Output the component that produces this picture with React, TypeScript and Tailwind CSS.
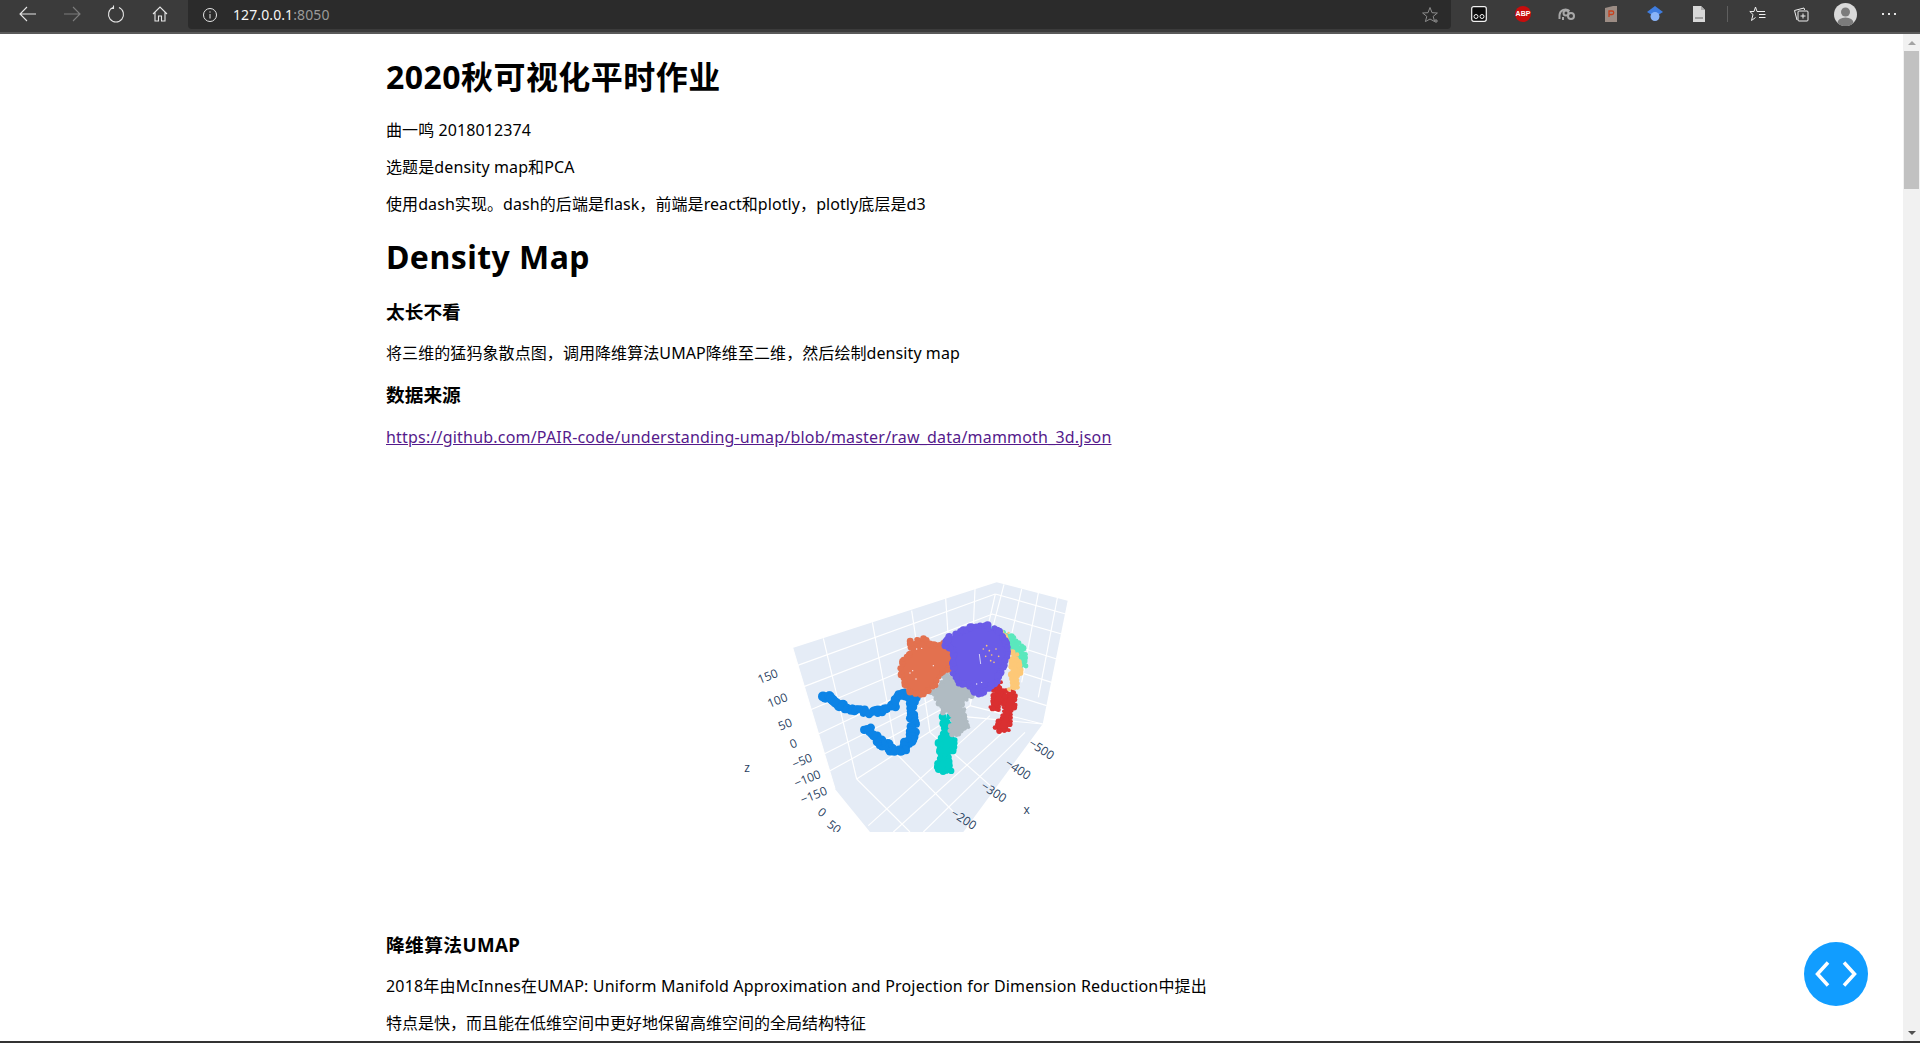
import React from "react";

type Pt = [number, number];

const FONT = "font-['Noto_Sans','Noto_Sans_CJK_SC',sans-serif]";

// repeatable noise, so the scatter looks the same on every load
function noise(i: number) {
  const v = Math.sin(i * 12.9898) * 43758.5453;
  return v - Math.floor(v);
}

// points along a polyline, used to give the scatter blobs their bumpy edges
function sample(points: Pt[], step: number, closed = false): Pt[] {
  const out: Pt[] = [];
  const list = closed ? [...points, points[0]] : points;
  for (let i = 0; i < list.length - 1; i++) {
    const [x1, y1] = list[i];
    const [x2, y2] = list[i + 1];
    const n = Math.max(1, Math.round(Math.hypot(x2 - x1, y2 - y1) / step));
    for (let j = 0; j < n; j++) {
      out.push([x1 + ((x2 - x1) * j) / n, y1 + ((y2 - y1) * j) / n]);
    }
  }
  return out;
}

function Blob({ points, color, r = 9 }: { points: Pt[]; color: string; r?: number }) {
  return (
    <g fill={color}>
      <polygon points={points.map((p) => p.join(",")).join(" ")} />
      {sample(points, 11, true).map(([x, y], i) => (
        <circle key={i} cx={x + (noise(i) - 0.5) * 9} cy={y + (noise(i + 50) - 0.5) * 9} r={r + noise(i + 90) * 4} />
      ))}
    </g>
  );
}

const trunk: Pt[] = [
  [318, 378], [345, 402], [375, 415], [410, 425], [450, 430], [490, 428], [520, 412], [540, 385],
  [556, 372], [585, 392], [574, 425], [582, 470], [572, 515], [545, 545], [515, 540], [485, 522],
  [455, 497], [435, 470],
];

const wallV: [number, number, number, number][] = [
  [310, 208, 410, 630], [457, 160, 530, 555], [575, 125, 630, 490], [677, 88, 700, 440], [765, 60, 750, 400],
];
const wallH: [number, number, number, number][] = [
  [231, 290, 826, 75], [246, 355, 818, 135], [265, 425, 810, 195], [284, 500, 800, 255],
  [302, 560, 780, 320], [322, 610, 765, 365],
];
const sideV: [number, number, number, number][] = [
  [852, 46, 795, 265], [905, 60, 852, 300], [955, 72, 905, 340], [1012, 87, 955, 385],
];
const sideH: [number, number, number, number][] = [
  [826, 75, 1037, 135], [816, 135, 1025, 195], [805, 205, 1010, 270], [790, 275, 995, 340], [770, 345, 980, 410],
];
const floorA: [number, number, number, number][] = [
  [410, 630, 750, 410], [445, 770, 810, 440], [520, 789, 860, 480], [610, 789, 915, 490],
];
const floorB: [number, number, number, number][] = [
  [530, 555, 760, 789], [630, 490, 890, 720], [700, 440, 968, 465], [410, 630, 570, 789],
];

const ticks: { t: string; x: number; y: number; r: number }[] = [
  { t: "150", x: 143, y: 321, r: -22 },
  { t: "100", x: 172, y: 393, r: -22 },
  { t: "50", x: 195, y: 465, r: -22 },
  { t: "0", x: 220, y: 523, r: -22 },
  { t: "−50", x: 246, y: 575, r: -22 },
  { t: "−100", x: 262, y: 628, r: -22 },
  { t: "−150", x: 281, y: 678, r: -22 },
  { t: "0", x: 307, y: 729, r: 38 },
  { t: "50", x: 343, y: 773, r: 38 },
  { t: "−500", x: 965, y: 540, r: 33 },
  { t: "−400", x: 895, y: 600, r: 33 },
  { t: "−300", x: 822, y: 668, r: 33 },
  { t: "−200", x: 732, y: 750, r: 33 },
];

const speckles: Pt[] = [[605, 238], [590, 240], [578, 305], [570, 312], [588, 330], [640, 290], [770, 345], [785, 340]];
const yellowDots: Pt[] = [[790, 240], [800, 230], [808, 245], [815, 258], [828, 240], [797, 262], [812, 275], [836, 262], [822, 280]];

function Mammoth() {
  return (
    <svg viewBox="0 0 1080 789" className="block w-[360px] h-[263px] ml-[334px]">
      <polygon points="218,237 830,40 1043,95 968,465 730,789 450,789 345,660" fill="#e5ecf6" />
      <g stroke="#ffffff" strokeWidth="3.5">
        {[...wallV, ...wallH, ...sideV, ...sideH, ...floorA, ...floorB].map(([a, b, c, d], i) => (
          <line key={i} x1={a} y1={b} x2={c} y2={d} />
        ))}
        <line x1="345" y1="660" x2="218" y2="237" />
        <line x1="826" y1="75" x2="750" y2="410" />
        <line x1="750" y1="410" x2="968" y2="465" />
      </g>
      <g fill="#0d84e6">
        {sample(trunk, 4).map(([x, y], i) => (
          <circle key={i} cx={x + (noise(i) - 0.5) * 18} cy={y + (noise(i + 20) - 0.5) * 16} r={i < 14 ? 15 : 10 + noise(i + 40) * 4} />
        ))}
      </g>
      <Blob color="#00cfc6" r={8} points={[[672, 445], [684, 445], [688, 500], [706, 515], [695, 548], [682, 570], [690, 605], [668, 608], [648, 595], [662, 560], [660, 520], [672, 500]]} />
      <Blob color="#b0bbc2" r={5} points={[[680, 305], [695, 325], [720, 352], [748, 352], [752, 385], [725, 400], [732, 440], [744, 478], [710, 500], [692, 488], [698, 440], [680, 430], [668, 432], [652, 395], [634, 370], [662, 345]]} />
      <Blob color="#da3031" r={5} points={[[835, 332], [848, 365], [852, 385], [835, 425], [815, 422], [812, 400], [825, 375], [812, 350]]} />
      <Blob color="#da3031" r={5} points={[[862, 368], [885, 368], [885, 405], [868, 460], [862, 488], [838, 490], [826, 478], [848, 440], [855, 400]]} />
      <Blob color="#5ae8bd" r={6} points={[[808, 176], [850, 192], [885, 208], [912, 250], [914, 290], [895, 292], [885, 255], [868, 240], [860, 210]]} />
      <Blob color="#fdc877" r={3} points={[[850, 190], [862, 195], [866, 208], [856, 204]]} />
      <Blob color="#fdc877" r={6} points={[[882, 252], [893, 268], [902, 300], [888, 358], [870, 358], [874, 320], [874, 285]]} />
      <Blob color="#e3714f" r={7} points={[[575, 218], [610, 208], [640, 228], [660, 228], [688, 218], [703, 250], [698, 298], [668, 308], [648, 348], [610, 378], [572, 372], [548, 340], [540, 295], [552, 268], [572, 248]]} />
      <Blob color="#6a5be7" r={8} points={[[692, 205], [712, 192], [750, 175], [800, 172], [838, 192], [860, 225], [863, 268], [842, 318], [808, 362], [772, 378], [748, 350], [718, 342], [700, 310], [704, 252], [672, 226]]} />
      <g fill="#fdc877">
        {yellowDots.map(([x, y], i) => (
          <circle key={i} cx={x} cy={y} r="2.5" />
        ))}
      </g>
      <g fill="#f3ecf5">
        {speckles.map(([x, y], i) => (
          <circle key={i} cx={x} cy={y} r="2" />
        ))}
      </g>
      <path d="M778 255l4 30" stroke="#e8e6fa" strokeWidth="2.5" />
      <g fill="#2a3f5f" fontSize="36" fontFamily="'Open Sans', sans-serif" textAnchor="middle" dominantBaseline="central">
        {ticks.map((k, i) => (
          <text key={i} x={k.x} y={k.y} transform={`rotate(${k.r} ${k.x} ${k.y})`}>{k.t}</text>
        ))}
        <text x="81" y="595">z</text>
        <text x="920" y="720">x</text>
      </g>
    </svg>
  );
}

function Btn({ children }: { children: React.ReactNode }) {
  return <div className="w-[44px] h-[28px] flex items-center justify-center shrink-0">{children}</div>;
}

function Toolbar() {
  return (
    <div className="h-[34px] shrink-0 bg-[#3b3b3b] border-b-2 border-[#5a5a5a] flex items-start pl-[6px]">
      <Btn>
        <svg width="18" height="16" viewBox="0 0 18 16" fill="none" stroke="#e6e6e6" strokeWidth="1.1"><path d="M17 8H1M8 1L1 8l7 7" /></svg>
      </Btn>
      <Btn>
        <svg width="18" height="16" viewBox="0 0 18 16" fill="none" stroke="#7d7d7d" strokeWidth="1.1"><path d="M1 8h16M10 1l7 7-7 7" /></svg>
      </Btn>
      <Btn>
        <svg width="18" height="18" viewBox="0 0 18 18" fill="none" stroke="#e6e6e6" strokeWidth="1.1"><path d="M12 2.6A7.5 7.5 0 1 1 6 2.6M6.5 0.5v3h-3" /></svg>
      </Btn>
      <Btn>
        <svg width="16" height="16" viewBox="0 0 16 16" fill="none" stroke="#e6e6e6" strokeWidth="1.1"><path d="M1 8l7-7 7 7M3 6.5V15h3.5v-5h3v5H13V6.5" /></svg>
      </Btn>
      <div className="w-[1263px] h-[29px] mx-[6px] shrink-0 bg-[#2b2b2b] rounded-b-[4px] flex items-center pl-[14px] pr-[11px]">
        <svg width="16" height="16" viewBox="0 0 16 16" fill="none" stroke="#e6e6e6" strokeWidth="1"><circle cx="8" cy="8" r="6.5" /><path d="M8 7v4.5M8 4.4v1.2" /></svg>
        <span className="ml-[15px] text-[14px] tracking-[0.1px] text-[#f5f5f5]">127.0.0.1<span className="text-[#9a9a9a]">:8050</span></span>
        <svg className="ml-auto" width="18" height="18" viewBox="0 0 18 18" fill="none" stroke="#8c8c8c" strokeWidth="1"><path d="M8 1.5l2 5.2 5.4.3-4.2 3.4 1.4 5.2L8 13l-4.6 2.6 1.4-5.2L.6 7 6 6.7zM14 13v4M12 15h4" /></svg>
      </div>
      <Btn>
        <svg width="16" height="16" viewBox="0 0 16 16"><rect x=".7" y=".7" width="14.6" height="14.6" rx="2" fill="#0c0c0c" stroke="#f2f2f2" strokeWidth="1.2" /><circle cx="5" cy="10.5" r="2" fill="none" stroke="#f2f2f2" /><circle cx="11" cy="10.5" r="2" fill="none" stroke="#f2f2f2" /></svg>
      </Btn>
      <Btn>
        <div className="w-[16px] h-[16px] rounded-full bg-[#c70d0d] flex items-center justify-center text-[7px] font-bold text-white font-['Liberation_Sans',sans-serif]">ABP</div>
      </Btn>
      <Btn>
        <svg width="18" height="14" viewBox="0 0 18 14" fill="none" stroke="#a8a8a8" strokeWidth="2"><path d="M1.5 12V8a6 6 0 0 1 10-4" /><circle cx="8" cy="6" r="2.5" /><circle cx="13" cy="9" r="3" /><path d="M5 10v3" /></svg>
      </Btn>
      <Btn>
        <svg width="12" height="16" viewBox="0 0 12 16"><path d="M0 2l8-2h4v16H0z" fill="#9c8c84" /><path d="M4 11V5h3a1.5 1.5 0 0 1 0 3.5H4" fill="none" stroke="#c8401c" strokeWidth="1.3" /></svg>
      </Btn>
      <Btn>
        <svg width="16" height="16" viewBox="0 0 16 16"><path d="M8 0l8 6-8 5-8-5z" fill="#3f7de0" /><circle cx="8" cy="10.5" r="4.5" fill="#8ab4f8" /></svg>
      </Btn>
      <Btn>
        <svg width="14" height="16" viewBox="0 0 14 16"><path d="M1 0h8l4 4v12H1z" fill="#d8d8d8" /><path d="M9 0v4h4" fill="#aaaaaa" /><rect x="3" y="11" width="8" height="2" fill="#a0a0a0" /></svg>
      </Btn>
      <div className="w-[1px] h-[16px] mt-[6px] ml-[6px] mr-[7px] bg-[#5f5f5f] shrink-0" />
      <Btn>
        <svg width="17" height="16" viewBox="0 0 17 16" fill="none" stroke="#f0f0f0" strokeWidth="1"><path d="M6.5 1l1.5 4.5h8M6.5 1L5 5.5H.8L4 8.5l-1.5 6 4-3M10 8.5h6.5M10 11.5h6.5" /></svg>
      </Btn>
      <Btn>
        <svg width="16" height="16" viewBox="0 0 16 16" fill="none" stroke="#f0f0f0" strokeWidth="1"><path d="M4 14L1.5 4.5 11 2l.6 2" /><rect x="5" y="5" width="10" height="10" rx="1" /><path d="M10 7.5v5M7.5 10h5" /></svg>
      </Btn>
      <Btn>
        <svg width="23" height="23" viewBox="0 0 23 23"><circle cx="11.5" cy="11.5" r="11.5" fill="#d9d9d9" /><circle cx="11.5" cy="9" r="4.5" fill="#7c7c7c" /><path d="M3.5 20a8 5.5 0 0 1 16 0 11.5 11.5 0 0 1-16 0" fill="#7c7c7c" /></svg>
      </Btn>
      <Btn>
        <svg width="14" height="2" viewBox="0 0 14 2" fill="#e6e6e6"><rect x="0" width="2" height="2" /><rect x="6" width="2" height="2" /><rect x="12" width="2" height="2" /></svg>
      </Btn>
    </div>
  );
}

function Heading1({ children, className = "" }: { children: React.ReactNode; className?: string }) {
  return <h1 className={`text-[32px] leading-[42px] font-bold tracking-[0.45px] ${className}`}>{children}</h1>;
}

function H3({ children, className = "" }: { children: React.ReactNode; className?: string }) {
  return <h3 className={`text-[18.72px] leading-[25px] font-bold ${className}`}>{children}</h3>;
}

function P({ children, className = "" }: { children: React.ReactNode; className?: string }) {
  return <p className={`text-[16px] leading-[21px] ${className}`}>{children}</p>;
}

export default function App() {
  return (
    <div className={`${FONT} relative h-[1043px] overflow-hidden flex flex-col bg-white text-black`}>
      <Toolbar />
      <div className="flex flex-1 min-h-0">
        <main className="flex-1 overflow-hidden pl-[386px] pt-[22px]">
          <Heading1>2020秋可视化平时作业</Heading1>
          <P className="mt-[22px] tracking-[0.1px]">曲一鸣 2018012374</P>
          <P className="mt-[16px] tracking-[0.12px]">选题是density map和PCA</P>
          <P className="mt-[16px] tracking-[0.08px]">使用dash实现。dash的后端是flask，前端是react和plotly，plotly底层是d3</P>
          <Heading1 className="mt-[21px]">Density Map</Heading1>
          <H3 className="mt-[21px]">太长不看</H3>
          <P className="mt-[19px] tracking-[0.08px]">将三维的猛犸象散点图，调用降维算法UMAP降维至二维，然后绘制density map</P>
          <H3 className="mt-[18px]">数据来源</H3>
          <P className="mt-[20px]">
            <a href="#" className="text-[#551a8b] underline tracking-[0.2px]">https://github.com/PAIR-code/understanding-umap/blob/master/raw_data/mammoth_3d.json</a>
          </P>
          <div className="mt-[15px] h-[450px] pt-[106px]">
            <Mammoth />
          </div>
          <H3 className="mt-[19px] tracking-[0.4px]">降维算法UMAP</H3>
          <P className="mt-[19px] tracking-[0.18px]">2018年由McInnes在UMAP: Uniform Manifold Approximation and Projection for Dimension Reduction中提出</P>
          <P className="mt-[16px]">特点是快，而且能在低维空间中更好地保留高维空间的全局结构特征</P>
        </main>
        <div className="w-[17px] shrink-0 bg-[#f1f1f1] flex flex-col items-center">
          <div className="h-[17px] flex items-center justify-center shrink-0">
            <div className="w-0 h-0 border-x-[4px] border-x-transparent border-b-[4px] border-b-[#a3a3a3]" />
          </div>
          <div className="w-[15px] h-[138px] bg-[#c1c1c1]" />
          <div className="mt-auto h-[17px] flex items-center justify-center shrink-0">
            <div className="w-0 h-0 border-x-[4px] border-x-transparent border-t-[4px] border-t-[#505050]" />
          </div>
        </div>
      </div>
      <div className="h-[2px] shrink-0 bg-[#333333]" />
      <button className="absolute left-[1804px] top-[942px] w-[64px] h-[64px] rounded-full bg-[#119dff] flex items-center justify-center">
        <svg width="42" height="26" viewBox="0 0 42 26" fill="none" stroke="#ffffff" strokeWidth="3.5"><path d="M13 1.5L2.5 13 13 24.5M29 1.5L39.5 13 29 24.5" /></svg>
      </button>
    </div>
  );
}
